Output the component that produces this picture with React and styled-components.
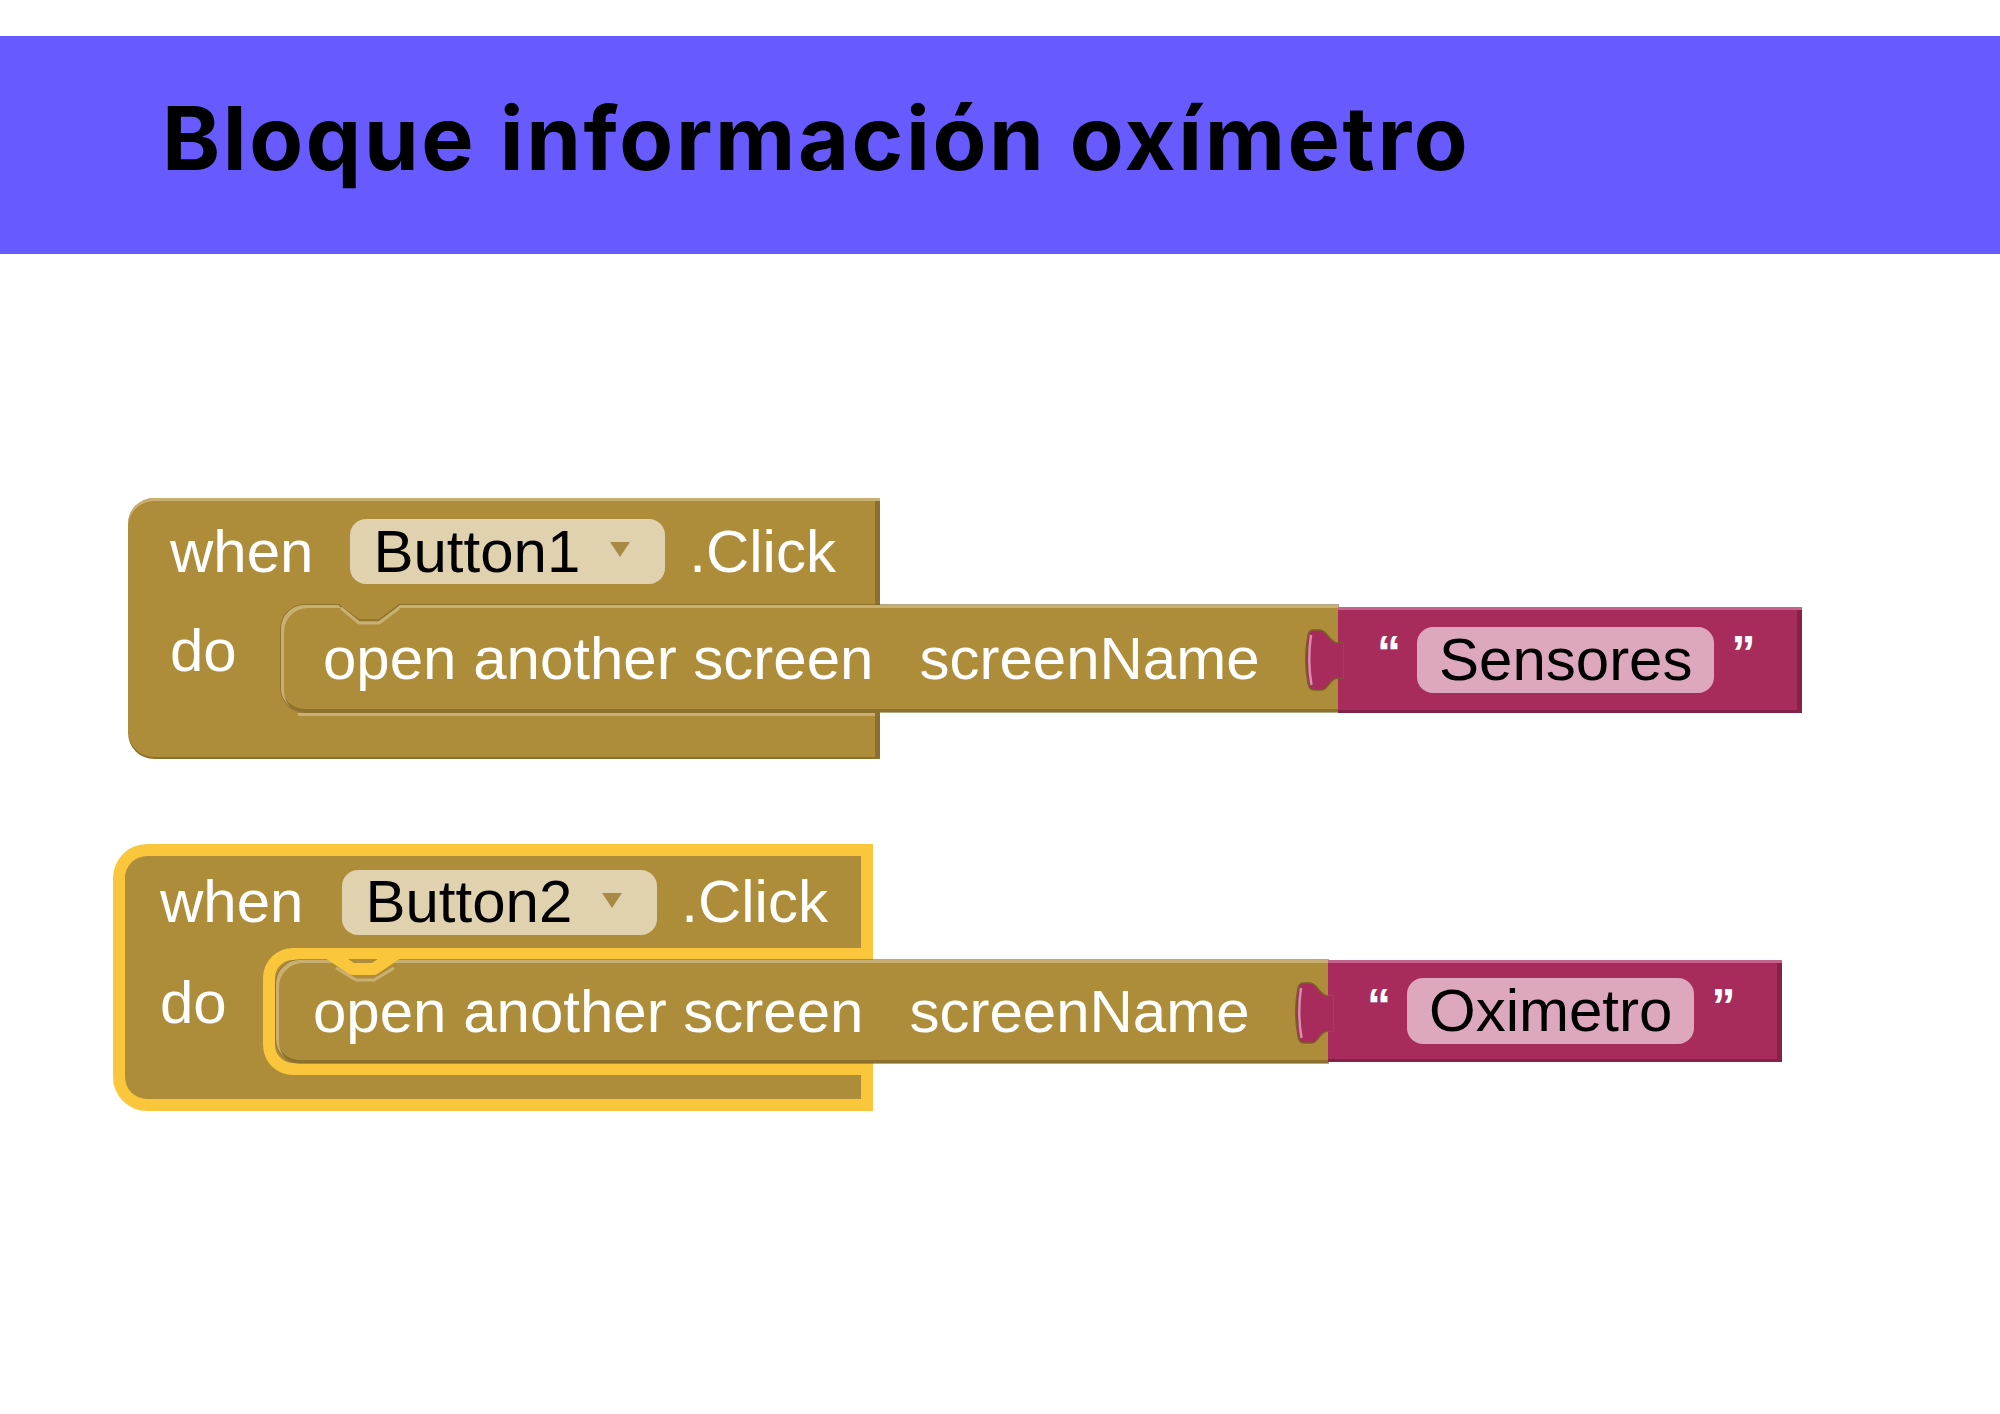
import React from "react";
import styled, { createGlobalStyle } from "styled-components";

const OLIVE = "#AE8D3A";
const OLIVE_LIGHT = "#C9B072";
const OLIVE_DARK = "#8C702D";
const RED = "#A82C5B";
const RED_LIGHT = "#C4638C";
const RED_DARK = "#85224A";
const PINK = "#DDA8BE";
const TAN = "#E0D1AF";
const YELLOW = "#FAC73C";

const Global = createGlobalStyle`
  html, body { margin: 0; padding: 0; background: #ffffff; }
  body { font-family: "Liberation Sans", Arial, sans-serif; }
`;

const Page = styled.div`
  width: 2000px;
  min-height: 1414px;
  padding-top: 36px;
  box-sizing: border-box;
`;

const Banner = styled.header`
  height: 218px;
  box-sizing: border-box;
  background: #675bff;
  padding: 58px 0 0 162px;
`;

const Title = styled.h1`
  margin: 0;
  font-family: Inter, "Noto Sans", sans-serif;
  font-weight: 700;
  font-size: 88px;
  line-height: 88px;
  letter-spacing: 2.6px;
  color: #000;
  white-space: nowrap;
`;

const Canvas = styled.main`
  display: flex;
  flex-direction: column;
  align-items: flex-start;
  gap: 85px;
  padding-top: 244px;
`;

const EventBlock = styled.div`
  display: flex;
  flex-direction: column;
  align-items: flex-start;
  margin-left: ${(p) => p.$x}px;
`;

const Head = styled.div`
  box-sizing: border-box;
  width: ${(p) => (p.$sel ? 760 : 752)}px;
  height: ${(p) => (p.$sel ? 104 : 107)}px;
  display: flex;
  align-items: center;
  padding-left: ${(p) => (p.$sel ? 35 : 42)}px;
  background: ${OLIVE};
  border: ${(p) => (p.$sel ? `12px solid ${YELLOW}` : "none")};
  border-bottom: none;
  border-top-left-radius: ${(p) => (p.$sel ? 34 : 26)}px;
  box-shadow: ${(p) =>
    p.$sel ? "none" : `inset 0 3px 0 ${OLIVE_LIGHT}, inset -5px 0 0 ${OLIVE_DARK}`};
`;

const Word = styled.span`
  font-size: 60px;
  line-height: 1;
  color: #fff;
  white-space: nowrap;
`;

const Field = styled.div`
  display: flex;
  align-items: center;
  gap: 30px;
  height: 65px;
  box-sizing: border-box;
  padding: 0 35px 0 23px;
  margin: 0 24px 0 ${(p) => p.$gap}px;
  background: ${TAN};
  border-radius: 16px;
  color: #000;
  font-size: 60px;
  line-height: 1;
  white-space: nowrap;
`;

const Arrow = styled.span`
  width: 0;
  height: 0;
  margin-bottom: 4px;
  border-left: 10px solid transparent;
  border-right: 10px solid transparent;
  border-top: 15px solid #a98a44;
`;

const Middle = styled.div`
  display: flex;
  align-items: stretch;
`;

const DoCol = styled.div`
  box-sizing: border-box;
  flex: none;
  width: ${(p) => (p.$sel ? 150 : 153)}px;
  background: ${OLIVE};
  border-left: ${(p) => (p.$sel ? `12px solid ${YELLOW}` : "none")};
  padding: ${(p) => (p.$sel ? "25px 0 0 35px" : "16px 0 0 42px")};
  color: #fff;
  font-size: 60px;
  line-height: 1;
`;

const Mouth = styled.div`
  position: relative;
  display: flex;
  align-items: flex-start;
  padding: ${(p) => (p.$sel ? "12px 0 12px 13px" : "0")};
  background: linear-gradient(${OLIVE}, ${OLIVE}) 0 0 / 40px 100% no-repeat;
  &::before {
    content: "";
    position: absolute;
    left: 0;
    top: 0;
    bottom: 0;
    width: ${(p) => p.$ring}px;
    box-sizing: border-box;
    background: ${OLIVE};
    border: ${(p) => (p.$sel ? `12px solid ${YELLOW}` : "none")};
    border-right: none;
    border-radius: ${(p) => (p.$sel ? "30px 0 0 30px" : "0")};
  }
`;

const Statement = styled.div`
  position: relative;
  z-index: 1;
  flex: none;
  box-sizing: border-box;
  width: ${(p) => p.$w}px;
  height: ${(p) => p.$h}px;
  display: flex;
  align-items: center;
  padding-left: ${(p) => p.$pad}px;
  background: ${OLIVE};
  border-radius: 24px 0 0 24px;
  box-shadow: inset 3px 3px 0 ${OLIVE_LIGHT}, inset 0 -3px 0 ${OLIVE_DARK},
    0 0 0 1px rgba(120, 95, 35, 0.55);
  color: #fff;
  font-size: 60px;
  line-height: 1;
  white-space: nowrap;
`;

const ParamName = styled.span`
  margin-left: 46px;
`;

const NotchSvg = styled.svg`
  position: absolute;
  left: 60px;
  top: 0;
  overflow: visible;
`;

const TextBlock = styled.div`
  position: relative;
  z-index: 2;
  flex: none;
  box-sizing: border-box;
  height: ${(p) => p.$h}px;
  margin-top: ${(p) => p.$mt}px;
  display: flex;
  align-items: center;
  padding: 0 47px 0 39px;
  background: ${RED};
  box-shadow: inset 0 3px 0 ${RED_LIGHT}, inset -5px 0 0 ${RED_DARK},
    inset 0 -3px 0 ${RED_DARK};
`;

const TabSvg = styled.svg`
  position: absolute;
  left: -33px;
  top: 21px;
  overflow: visible;
`;

const Quote = styled.span`
  align-self: flex-start;
  margin-top: 22px;
  margin-left: ${(p) => p.$ml || 0}px;
  margin-right: ${(p) => p.$mr || 0}px;
  font-size: 48px;
  font-weight: 700;
  line-height: 1;
  color: #fff;
`;

const Pill = styled.div`
  display: flex;
  align-items: center;
  height: 66px;
  box-sizing: border-box;
  padding: 0 22px;
  border-radius: 16px;
  background: ${PINK};
  color: #000;
  font-size: 60px;
  line-height: 1;
  white-space: nowrap;
`;

const Foot = styled.div`
  box-sizing: border-box;
  width: ${(p) => (p.$sel ? 760 : 752)}px;
  height: ${(p) => (p.$sel ? 36 : 46)}px;
  background: ${(p) =>
    p.$sel
      ? OLIVE
      : `linear-gradient(${OLIVE_LIGHT}, ${OLIVE_LIGHT}) 170px 0 / 100% 3px no-repeat, ${OLIVE}`};
  border: ${(p) => (p.$sel ? `12px solid ${YELLOW}` : "none")};
  border-top: none;
  border-bottom-left-radius: ${(p) => (p.$sel ? 34 : 26)}px;
  box-shadow: ${(p) =>
    p.$sel
      ? "none"
      : `inset -5px 0 0 ${OLIVE_DARK}, inset 0 -2px 0 ${OLIVE_DARK}`};
`;

function Notch({ sel }) {
  return (
    <NotchSvg width="60" height="24" viewBox="0 0 60 24">
      <polygon points="-2,-1 18,16 38,16 58,-1" fill={OLIVE} />
      {sel ? (
        <polyline
          points="-6,-6 16,9 38,9 60,-6"
          fill="none"
          stroke={YELLOW}
          strokeWidth="12"
          strokeLinejoin="round"
        />
      ) : (
        <polyline
          points="-2,0 18,15 38,15 58,0"
          fill="none"
          stroke={OLIVE_DARK}
          strokeWidth="1.5"
        />
      )}
      <polyline
        points={sel ? "0,8 20,20 38,20 58,8" : "0,3 18,18 38,18 58,3"}
        fill="none"
        stroke={OLIVE_LIGHT}
        strokeWidth="3"
      />
    </NotchSvg>
  );
}

function Tab() {
  return (
    <TabSvg width="38" height="64" viewBox="0 0 38 64">
      <path
        d="M38 15 L33 15 C25 15 22 2 15 2 L8 2 C4 2 3 5 2.5 10 C0 25 0 39 3 55 C3.5 59 5 62 9 62 L17 62 C23 62 25 50 33 50 L38 50 Z"
        fill={RED}
        stroke="#7a6128"
        strokeWidth="1.5"
      />
      <path d="M6 7 C3.5 24 3.5 40 6.5 57" fill="none" stroke="#D98DAD" strokeWidth="2.5" />
      <rect x="33" y="15" width="5" height="35" fill={RED} />
    </TabSvg>
  );
}

function WhenClick({ x, sel, button, screen, ring, stmt }) {
  return (
    <EventBlock $x={x}>
      <Head $sel={sel}>
        <Word>when</Word>
        <Field $gap={sel ? 39 : 37}>
          <span>{button}</span>
          <Arrow />
        </Field>
        <Word>.Click</Word>
      </Head>
      <Middle>
        <DoCol $sel={sel}>do</DoCol>
        <Mouth $sel={sel} $ring={ring}>
          <Statement $w={stmt.w} $h={stmt.h} $pad={stmt.pad}>
            <Notch sel={sel} />
            <span>open another screen</span>
            <ParamName>screenName</ParamName>
          </Statement>
          <TextBlock $h={stmt.h - 1} $mt={sel ? 0 : 2}>
            <Tab />
            <Quote $mr={16}>“</Quote>
            <Pill>{screen}</Pill>
            <Quote $ml={17}>”</Quote>
          </TextBlock>
        </Mouth>
      </Middle>
      <Foot $sel={sel} />
    </EventBlock>
  );
}

export default function App() {
  return (
    <Page>
      <Global />
      <Banner>
        <Title>Bloque información oxímetro</Title>
      </Banner>
      <Canvas>
        <WhenClick
          x={128}
          button="Button1"
          screen="Sensores"
          ring={599}
          stmt={{ w: 1057, h: 107, pad: 42 }}
        />
        <WhenClick
          x={113}
          sel
          button="Button2"
          screen="Oximetro"
          ring={610}
          stmt={{ w: 1052, h: 103, pad: 37 }}
        />
      </Canvas>
    </Page>
  );
}
